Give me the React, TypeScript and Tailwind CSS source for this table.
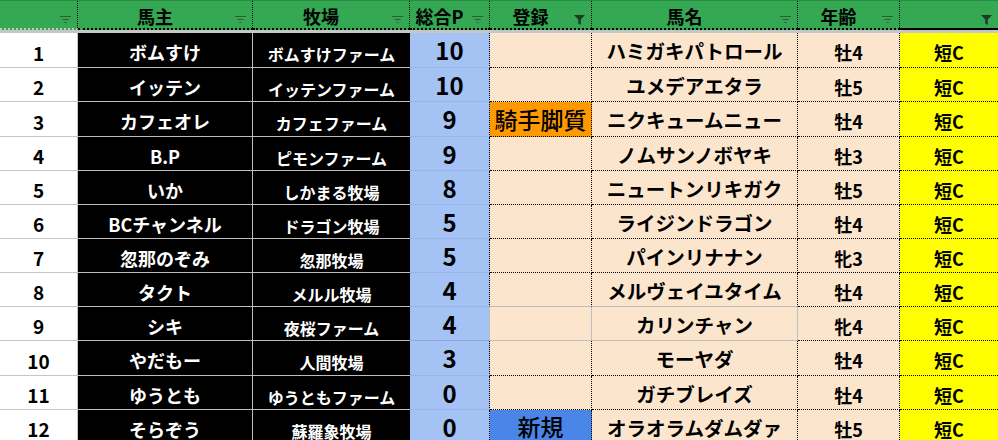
import React from 'react'

// 列幅はスクショから実測（合計 998px）
const GRID = 'grid grid-cols-[78px_175px_157px_80px_102px_206px_102px_98px]'

type Row = {
  no: number
  owner: string
  farm: string
  pts: number
  entry?: '騎手脚質' | '新規'
  horse: string
  age: string
  tall?: boolean
}

const ROWS: Row[] = [
  { no: 1, owner: 'ボムすけ', farm: 'ボムすけファーム', pts: 10, horse: 'ハミガキパトロール', age: '牡4', tall: true },
  { no: 2, owner: 'イッテン', farm: 'イッテンファーム', pts: 10, horse: 'ユメデアエタラ', age: '牡5' },
  { no: 3, owner: 'カフェオレ', farm: 'カフェファーム', pts: 9, entry: '騎手脚質', horse: 'ニクキュームニュー', age: '牡4', tall: true },
  { no: 4, owner: 'B.P', farm: 'ピモンファーム', pts: 9, horse: 'ノムサンノボヤキ', age: '牡3' },
  { no: 5, owner: 'いか', farm: 'しかまる牧場', pts: 8, horse: 'ニュートンリキガク', age: '牡5' },
  { no: 6, owner: 'BCチャンネル', farm: 'ドラゴン牧場', pts: 5, horse: 'ライジンドラゴン', age: '牡4' },
  { no: 7, owner: '忽那のぞみ', farm: '忽那牧場', pts: 5, horse: 'パインリナナン', age: '牝3' },
  { no: 8, owner: 'タクト', farm: 'メルル牧場', pts: 4, horse: 'メルヴェイユタイム', age: '牡4' },
  { no: 9, owner: 'シキ', farm: '夜桜ファーム', pts: 4, horse: 'カリンチャン', age: '牝4' },
  { no: 10, owner: 'やだもー', farm: '人間牧場', pts: 3, horse: 'モーヤダ', age: '牡4', tall: true },
  { no: 11, owner: 'ゆうとも', farm: 'ゆうともファーム', pts: 0, horse: 'ガチブレイズ', age: '牡4' },
  { no: 12, owner: 'そらぞう', farm: '蘇羅象牧場', pts: 0, entry: '新規', horse: 'オラオラムダムダァ', age: '牡5' },
]

const HEADERS: { label: string; active?: boolean }[] = [
  { label: '' },
  { label: '馬主' },
  { label: '牧場' },
  { label: '総合P' },
  { label: '登録', active: true },
  { label: '馬名' },
  { label: '年齢' },
  { label: '', active: true },
]

function FilterIcon({ active }: { active?: boolean }) {
  if (active) {
    return (
      <svg width="11" height="10" viewBox="0 0 11 10">
        <path d="M0 0h11L6.8 4.6V10L4.2 8.6V4.6Z" fill="#1d3b26" />
      </svg>
    )
  }
  return (
    <svg width="11" height="8" viewBox="0 0 11 8">
      <path d="M0 1.5h11M2.5 4.5h6M4.5 7.5h2" stroke="#2f5b3b" strokeWidth="1" />
    </svg>
  )
}

function HeaderRow() {
  return (
    <div className={`${GRID} h-[30px] border-t border-[#2a8c44] bg-[#34a853]`}>
      {HEADERS.map((h, i) => (
        <div
          key={i}
          className={`relative flex items-center justify-center pr-[20px] pt-[3px] text-[18px] font-bold leading-none text-black ${
            i === 0 ? 'border-b-2 border-b-[#c6c6c6]' : 'border-b-2 border-b-black'
          } ${i < 7 ? 'border-r border-dotted border-r-black' : ''}`}
        >
          {h.label}
          <span className="absolute right-[6px] top-[14px] flex">
            <FilterIcon active={h.active} />
          </span>
        </div>
      ))}
    </div>
  )
}

export default function App() {
  return (
    <div className="h-[440px] w-[998px] overflow-hidden bg-white font-['Noto_Sans_CJK_JP','Noto_Sans',sans-serif]">
      <HeaderRow />
      <div className="h-[3px] bg-[#c6c6c6]" />

      {ROWS.map((r) => {
        const grayCell = r.no === 9
        const aboveGray = r.no === 8
        return (
          <div key={r.no} className={`${GRID} ${r.tall ? 'h-[35px]' : 'h-[34px]'}`}>
            <div className="flex items-center justify-center border-b border-r border-[#c6c6c6] pt-[4px] text-[19px] font-bold leading-none text-black">
              {r.no}
            </div>
            <div className="flex items-center justify-center border-b border-r border-[#bdbdbd] bg-black pt-[4px] text-[18px] font-bold leading-none text-white">
              {r.owner}
            </div>
            <div className="flex items-center justify-center border-b border-[#bdbdbd] bg-black pt-[8px] text-[16px] font-bold leading-none text-white">
              {r.farm}
            </div>
            <div
              className={`flex items-center justify-center border-b border-b-[#8eaad8] bg-[#a4c2f4] text-[24px] font-bold leading-none text-black border-r ${
                grayCell ? 'border-r-[#bdbdbd]' : 'border-dotted border-r-black'
              }`}
            >
              {r.pts}
            </div>
            <div
              className={`flex items-center justify-center border-b border-r text-[23px] font-medium leading-none text-black ${
                r.entry === '騎手脚質' ? 'bg-[#ff9900]' : r.entry === '新規' ? 'bg-[#4a86e8]' : 'bg-[#fce5cd]'
              } ${
                grayCell
                  ? 'border-[#bdbdbd]'
                  : aboveGray
                    ? 'border-dotted border-r-black border-b-[#bdbdbd] [border-bottom-style:solid]'
                    : 'border-dotted border-black'
              }`}
            >
              {r.entry}
            </div>
            <div
              className={`flex items-center justify-center border-b border-r bg-[#fce5cd] pt-[2px] text-[19.5px] font-bold leading-none text-black ${
                grayCell
                  ? 'border-[#bdbdbd]'
                  : aboveGray
                    ? 'border-dotted border-r-black border-b-[#bdbdbd] [border-bottom-style:solid]'
                    : 'border-dotted border-black'
              }`}
            >
              {r.horse}
            </div>
            <div className="flex items-center justify-center border-b border-r border-dotted border-black bg-[#fce5cd] pt-[4px] text-[18px] font-bold leading-none text-black">
              {r.age}
            </div>
            <div className="flex items-center justify-center border-b border-dotted border-black bg-[#ffff00] pt-[4px] text-[18px] font-bold leading-none text-black">
              短C
            </div>
          </div>
        )
      })}
    </div>
  )
}
